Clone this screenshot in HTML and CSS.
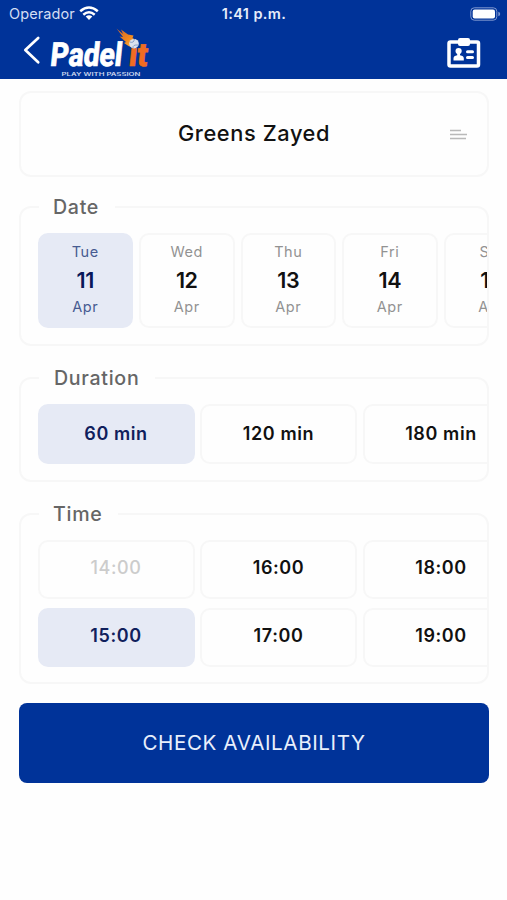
FILE: index.html
```html
<!DOCTYPE html>
<html lang="en">
<head>
<meta charset="utf-8">
<meta name="viewport" content="width=device-width">
<title>Padel it</title>
<link rel="stylesheet" href="styles.css">
</head>
<body>
<header class="header">
  <div class="status">
    <div class="carrier"><span>Operador</span>
      <svg width="20" height="15" viewBox="0 0 20 15" fill="none" stroke="#fff" stroke-width="2.5"><path d="M1.2 5.3Q10-2.3 18.8 5.3M4.3 8.7Q10 3.9 15.7 8.7"/><path d="M6.7 10.6Q10 8 13.3 10.6L10 14Z" fill="#fff" stroke="none"/></svg>
    </div>
    <span class="clock">1:41 p.m.</span>
    <svg class="battery" width="32" height="14" viewBox="0 0 32 14"><rect x=".8" y=".8" width="26" height="12.4" rx="3.5" fill="none" stroke="#7f98cf"/><rect x="2.7" y="2.6" width="22.3" height="8.8" rx="2" fill="#fff"/><path d="M28.3 4.7Q30.2 5.3 30.2 7T28.3 9.3Z" fill="#7f98cf"/></svg>
  </div>
  <nav class="nav">
    <svg class="back" width="18" height="30" viewBox="0 0 18 30" fill="none" stroke="#fff" stroke-width="2.7" stroke-linecap="round" stroke-linejoin="round"><path d="M15.2 3L2.3 15L15.2 27.2"/></svg>
    <svg class="logo" width="110" height="52" viewBox="0 0 110 52">
      <defs><linearGradient id="flame" x1="0" y1="0" x2="1" y2="1"><stop offset="0" stop-color="#c9602c"/><stop offset=".55" stop-color="#f28a1e"/><stop offset="1" stop-color="#ffc25a"/></linearGradient></defs>
      <g transform="translate(4.5 39.3) skewX(-6)" class="word">
        <text x="0" y="0" textLength="72" lengthAdjust="spacingAndGlyphs" fill="#fff" stroke="#fff">Padel</text>
        <text x="78.5" y="0" textLength="19" lengthAdjust="spacingAndGlyphs" fill="#ef6c22" stroke="#ef6c22">it</text>
      </g>
      <path d="M71.5 1.5L78 7L76 2.5L83 7.5L88.5 8.5L87.5 11L93 14L88 21L83.5 19L79 16L81 15L74.5 9.5L78 10Z" fill="url(#flame)"/>
      <circle cx="89" cy="16.7" r="4.8" fill="#d9e1ef"/>
      <path d="M85 15Q89 16.5 89.3 12M88 21Q87.5 17.5 93.2 18" fill="none" stroke="#8299c4" stroke-width=".9"/>
      <text class="tagline" x="16.5" y="49.3" textLength="79" lengthAdjust="spacingAndGlyphs">PLAY WITH PASSION</text>
    </svg>
    <svg class="badge" width="34" height="32" viewBox="0 0 34 32"><rect x="2" y="5" width="29.5" height="24" rx="1.5" fill="none" stroke="#fff" stroke-width="3.5"/><rect x="11" y="1" width="12" height="8" rx="2" fill="#fff"/><circle cx="11.6" cy="14" r="3.1" fill="#fff"/><path d="M10.2 15h2.8v3.2q3.8.5 3.8 3v2.3H6.5v-2.3q0-2.5 3.7-3Z" fill="#fff"/><path d="M20.5 14.7h5M20.5 20.6h5" stroke="#fff" stroke-width="3" stroke-linecap="round"/></svg>
  </nav>
</header>
<main class="content">
  <div class="venue"><h1>Greens Zayed</h1>
    <svg width="17" height="11" viewBox="0 0 17 11" stroke="#b9b9b9" stroke-width="1.4"><path d="M0 1.5h11M0 5.5h17M0 9.5h16"/></svg>
  </div>
  <section class="group date"><h2>Date</h2>
    <div class="scroller days">
      <div class="chip day selected"><span>Tue</span><b>11</b><span>Apr</span></div>
      <div class="chip day"><span>Wed</span><b>12</b><span>Apr</span></div>
      <div class="chip day"><span>Thu</span><b>13</b><span>Apr</span></div>
      <div class="chip day"><span>Fri</span><b>14</b><span>Apr</span></div>
      <div class="chip day"><span>Sat</span><b>15</b><span>Apr</span></div>
    </div>
  </section>
  <section class="group duration"><h2>Duration</h2>
    <div class="scroller durations">
      <div class="chip selected">60 min</div><div class="chip">120 min</div><div class="chip">180 min</div>
    </div>
  </section>
  <section class="group time"><h2>Time</h2>
    <div class="scroller times">
      <div class="chip disabled">14:00</div><div class="chip">16:00</div><div class="chip">18:00</div>
      <div class="chip selected">15:00</div><div class="chip">17:00</div><div class="chip">19:00</div>
    </div>
  </section>
  <button class="check">CHECK AVAILABILITY</button>
</main>
</body>
</html>
```
FILE: styles.css
```css
* { box-sizing: border-box; }
body { margin: 0; background: #fefefe; font-family: Inter, "Liberation Sans", sans-serif; color: #111; }
.header { height: 79px; background: #003399; color: #fff; }
.status { display: grid; grid-template-columns: 1fr auto 1fr; align-items: center; height: 27px; padding: 0 5px 0 9px; }
.carrier { display: flex; align-items: center; gap: 4px; font-size: 14.5px; letter-spacing: .1px; color: #d4def3; }
.clock { margin-left: -3px; font-size: 14.5px; font-weight: 600; letter-spacing: .4px; color: #e6edfa; }
.battery { justify-self: end; }
.nav { display: flex; align-items: center; height: 52px; padding: 0 26px 0 23px; }
.back { margin-top: -6px; }
.logo { margin-left: 4px; }
.badge { margin-left: auto; margin-top: -1px; }
.word { font: 800 33px Roboto, sans-serif; stroke-width: .7; }
.tagline { font: 600 4.6px Inter, sans-serif; fill: #cbd7ee; }
.content { padding: 12px 18px 0 19px; }
.venue { display: grid; grid-template-columns: 1fr auto 1fr; align-items: center; height: 86px; padding: 0 20px; border: 2px solid #f7f7f7; border-radius: 12px; }
.venue h1 { grid-column: 2; margin: -2px 0 0; font-size: 21.8px; font-weight: 500; letter-spacing: .6px; }
.venue svg { justify-self: end; }
.group { border: 2px solid #f7f7f7; border-radius: 12px; }
.group h2 { width: fit-content; height: 28px; margin: -15px 0 0 18px; padding: 0 16px 0 14px; background: #fefefe; color: #666; font-size: 19.6px; font-weight: 500; line-height: 28px; letter-spacing: .7px; }
.date { height: 140px; margin-top: 29px; }
.duration { height: 105px; margin-top: 31px; }
.time { height: 171px; margin-top: 31px; }
.duration h2 { padding-left: 15px; }
.scroller { display: grid; overflow: hidden; margin-top: 12px; padding-left: 16.5px; }
.days { grid-template-columns: repeat(5, 95.5px); column-gap: 6px; }
.durations { grid-template-columns: repeat(3, 157px); column-gap: 5.5px; }
.times { grid-template-columns: repeat(3, 157px); gap: 9px 5.5px; }
.chip { display: flex; align-items: center; justify-content: center; height: 60px; border: 2px solid #f7f7f7; border-radius: 10px; font-size: 18px; font-weight: 600; letter-spacing: .6px; padding-bottom: 2px; }
.times .chip { height: 59px; padding-bottom: 4px; }
.times { margin-top: 12px; }
.chip.selected { background: #e6eaf5; border-color: #e6eaf5; color: #10205c; }
.chip.disabled { color: #ccc; font-weight: 500; }
.chip.day { flex-direction: column; justify-content: flex-start; height: 95px; padding: 7px 0 0; font-size: 14.5px; font-weight: 400; letter-spacing: .5px; color: #929292; line-height: 20px; }
.day b { color: #111; font-size: 21.5px; line-height: 26px; margin: 5px 0 4px; font-weight: 600; letter-spacing: -.4px; }
.chip.day.selected { color: #475b91; }
.day.selected b { color: #08185a; }
.check { display: block; width: 100%; height: 80px; margin-top: 19px; padding: 0 0 2px; border: 0; border-radius: 8px; background: #003399; color: #e8effc; font: 400 20.6px Inter, sans-serif; letter-spacing: .6px; }
```
